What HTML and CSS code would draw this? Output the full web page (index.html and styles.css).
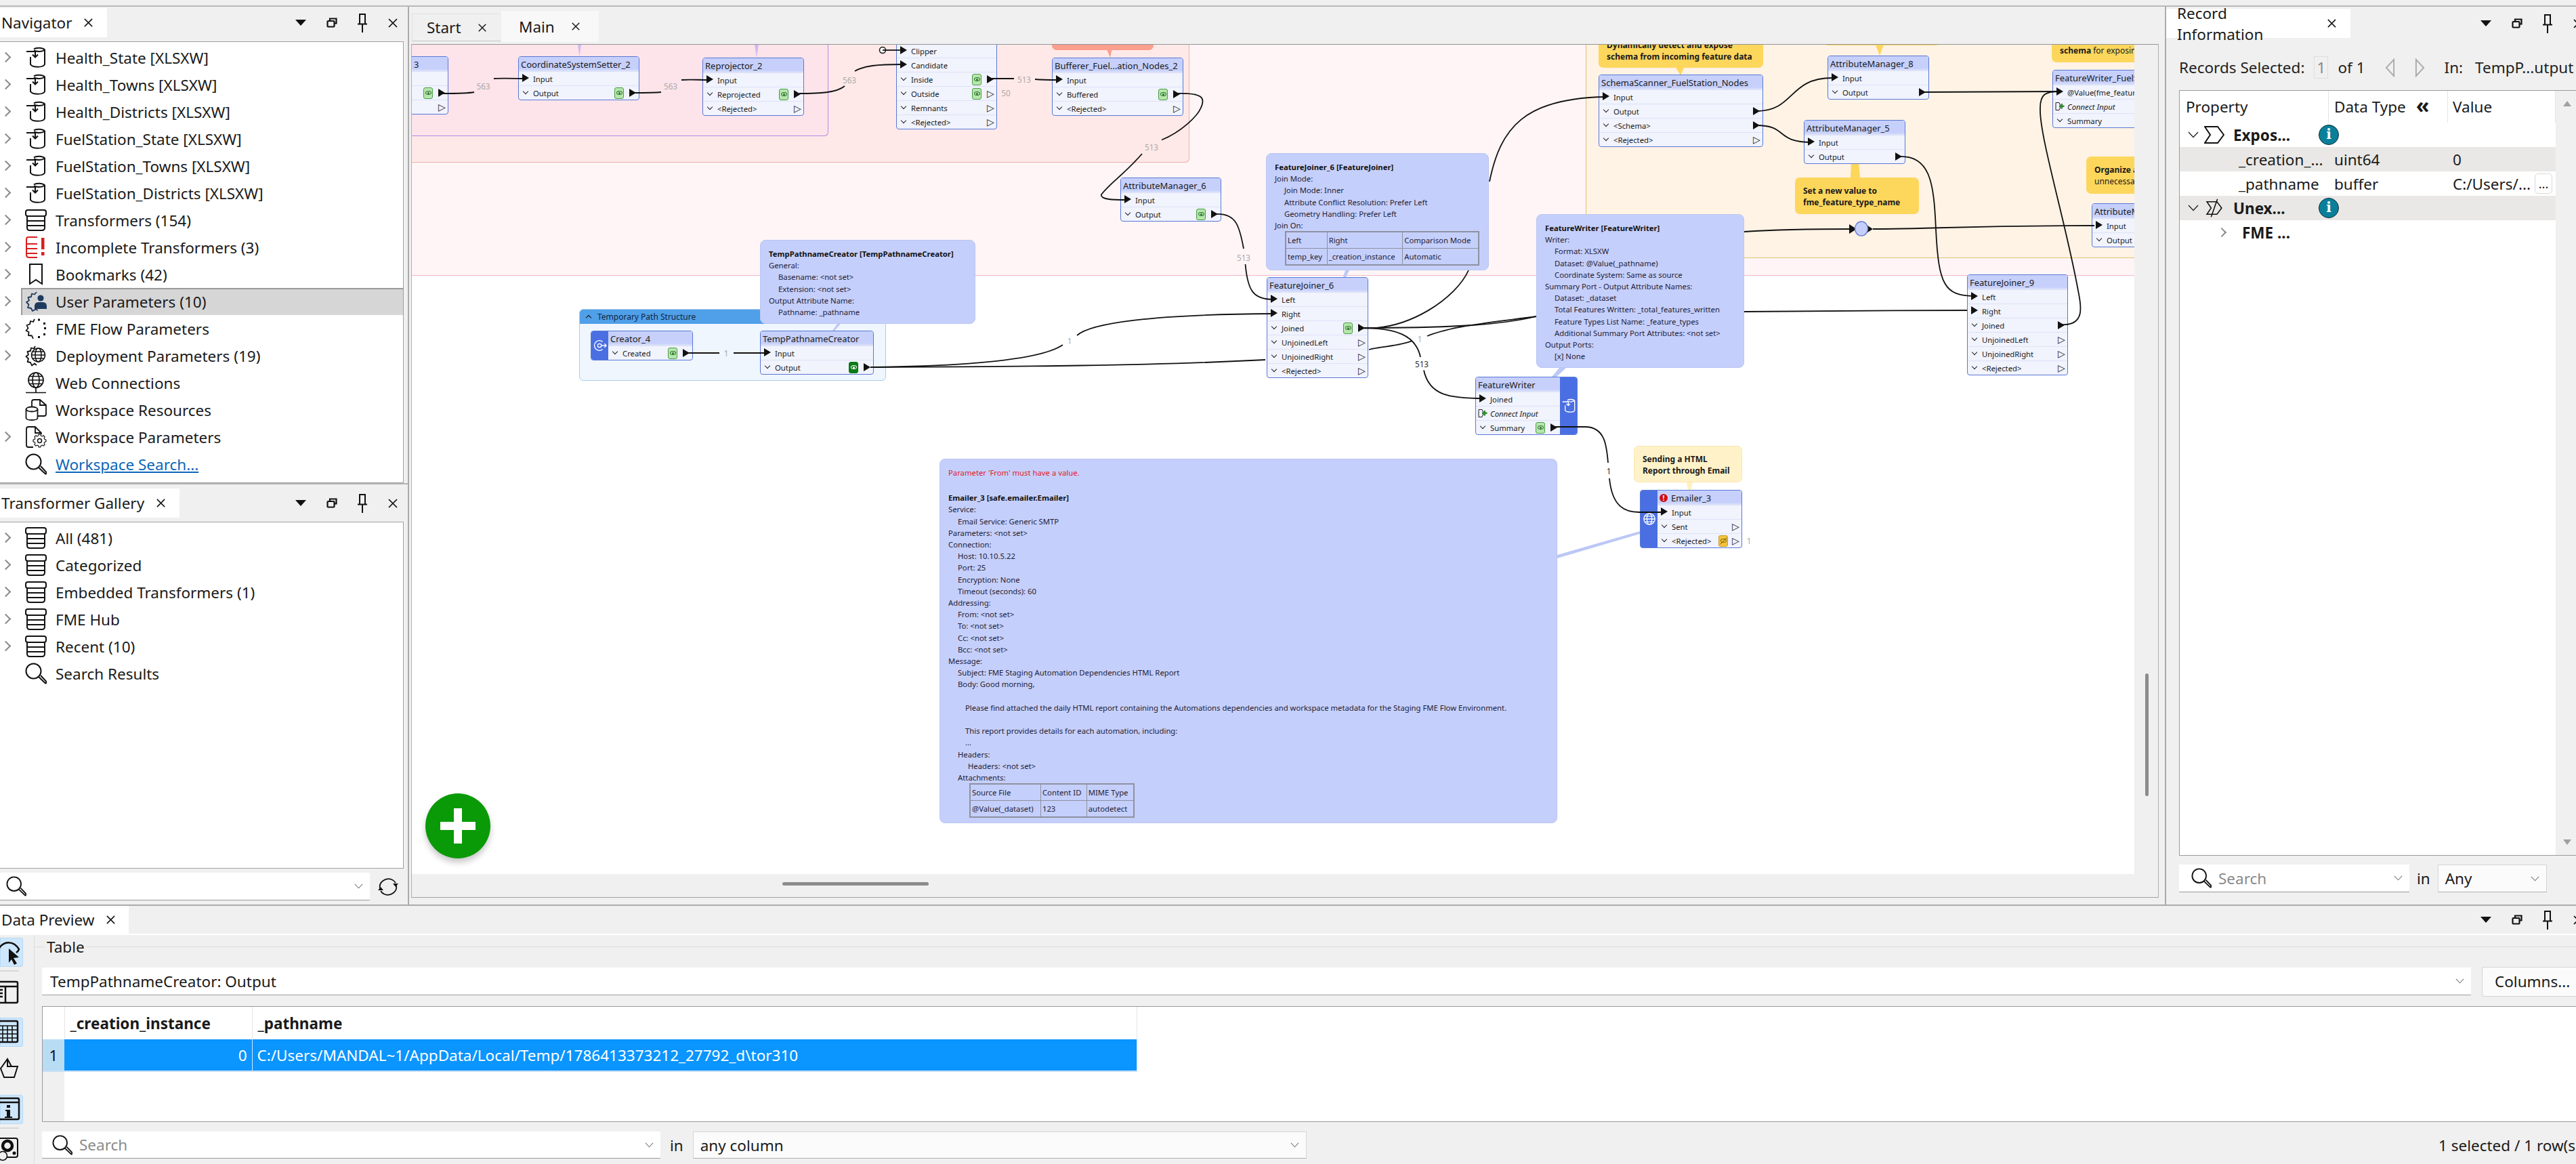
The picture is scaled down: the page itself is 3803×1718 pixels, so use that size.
FILE: index.html
```html
<!DOCTYPE html>
<html lang="en">
<head>
  <meta charset="UTF-8" />
  <title>FME Workbench</title>
  <link rel="stylesheet" href="styles.css">
</head>
<body>
  <!-- shared icons -->
  <svg class="defs" width="0" height="0">
    <defs>
      <symbol id="i-feature" viewBox="0 0 30 32"><g fill="none" stroke="currentColor" stroke-width="2">
        <path d="M12 3.5C15 1 25 1 28 4.5V26C26 31 10 31 7 26V15"/><path d="M12 5.5C17 8 24 7.5 28 4.5"/>
        <path d="M1 7H14V15M10 11.5L14 15.5L18 11.5"/></g></symbol>
      <symbol id="i-stack" viewBox="0 0 32 32"><g fill="none" stroke="currentColor" stroke-width="2">
        <rect x="1" y="1" width="30" height="9" rx="3"/><path d="M3 10V27Q3 31 7 31H25Q29 31 29 27V10M3 17H29M3 24H29"/></g></symbol>
      <symbol id="i-incomplete" viewBox="0 0 32 32"><g fill="none" stroke="#d8201f" stroke-width="2">
        <path d="M18 1H5Q2 1 2 4V27Q2 31 6 31H18M2 11H18M2 18H18M2 25H18"/></g><rect x="24" y="2" width="4.5" height="17" fill="#d8201f"/><rect x="24" y="23" width="4.5" height="5" fill="#d8201f"/></symbol>
      <symbol id="i-bookmark" viewBox="0 0 22 32"><path d="M2 1H20V30L11 24L2 30Z" fill="none" stroke="currentColor" stroke-width="2"/></symbol>
      <g id="tooth"><path d="M-2.8-10.4L-2-13.5H2L2.8-10.4L5.4-9.3" fill="none" stroke="currentColor" stroke-width="1.7" stroke-linejoin="round"/></g>
      <symbol id="i-gear" viewBox="-15 -15 30 30">
        <use href="#tooth"/><use href="#tooth" transform="rotate(45)"/><use href="#tooth" transform="rotate(90)"/><use href="#tooth" transform="rotate(135)"/>
        <use href="#tooth" transform="rotate(180)"/><use href="#tooth" transform="rotate(225)"/><use href="#tooth" transform="rotate(270)"/><use href="#tooth" transform="rotate(315)"/>
      </symbol>
      <symbol id="i-userparam" viewBox="0 0 32 32">
        <path d="M17 2L14 5.500L10 4.500L9 9L4.500 10L6 14.500L2 17L5.500 20.500L4 25L9 26L11 30L15.500 27.500L19 29" fill="none" stroke="#1f3a5f" stroke-width="1.800" stroke-linejoin="round"/>
        <circle cx="23" cy="11" r="4.600" fill="#1f3a5f"/><path d="M14 27V23Q14 17 20 17H26Q32 17 32 23V27Z" fill="#1f3a5f"/></symbol>
      <symbol id="i-flowparam" viewBox="0 0 32 32">
        <path d="M14 2L12 6L8 5L7 9.500L2.500 11L4.500 15.500L1.500 19L5.500 21L5 26L10 26.500L12 31" fill="none" stroke="currentColor" stroke-width="1.800" stroke-linejoin="round"/>
        <path d="M19 1.500h3v3h-3zM27 7h3v3h-3zM28 14h3v3h-3zM27 23h3v3h-3zM19 27h3v3h-3z" fill="currentColor"/></symbol>
      <symbol id="i-deploy" viewBox="0 0 32 32">
        <path d="M15 2L13 5.500L9 4.500L8 9L3.500 10L5 14.500L1.500 17L5 20.500L3.500 25L8 26L10 30.500L14 27.500L17 30" fill="none" stroke="currentColor" stroke-width="1.800" stroke-linejoin="round"/>
        <g fill="none" stroke="currentColor" stroke-width="1.500"><circle cx="19.500" cy="15" r="10"/><ellipse cx="19.500" cy="15" rx="4.500" ry="10"/><path d="M9.500 15H29.500M11 10H28M11 20H28"/></g></symbol>
      <symbol id="i-globe" viewBox="0 0 32 32"><g fill="none" stroke="currentColor" stroke-width="1.700">
        <circle cx="16" cy="12" r="11"/><ellipse cx="16" cy="12" rx="5" ry="11"/><path d="M5 12H27M7 6.500H25M7 17.500H25M16 23V30M1 30.500H31"/></g></symbol>
      <symbol id="i-resource" viewBox="0 0 32 32"><g fill="none" stroke="currentColor" stroke-width="1.800">
        <path d="M10 12V4Q10 1 13 1H22L31 9V22Q31 25 28 25H19"/><path d="M22 1V9H31"/>
        <ellipse cx="10" cy="15" rx="8.500" ry="3.500"/><path d="M1.500 15V28C2 32 18 32 18.500 28V15"/></g></symbol>
      <symbol id="i-wsparam" viewBox="0 0 32 32"><g fill="none" stroke="currentColor" stroke-width="1.800">
        <path d="M12 31H5Q2 31 2 28V4Q2 1 5 1H15L24 10V12"/><path d="M15 1V10H24"/></g>
        <use href="#i-gear" x="11" y="11" width="21" height="21"/><circle cx="21.500" cy="21.500" r="3" fill="none" stroke="currentColor" stroke-width="1.500"/></symbol>
      <symbol id="i-search" viewBox="0 0 32 32"><g fill="none" stroke="currentColor" stroke-width="2">
        <circle cx="12.500" cy="12.500" r="11"/><path d="M20 21L30 30.500M23 19L31 27.500Q32 30 30 31"/></g></symbol>
      <symbol id="i-close" viewBox="0 0 16 16"><path d="M2 2L14 14M14 2L2 14" fill="none" stroke="currentColor" stroke-width="1.700"/></symbol>
      <symbol id="i-restore" viewBox="0 0 16 16"><g fill="none" stroke="currentColor" stroke-width="2.200"><path d="M5 4V1.500H14.500V8.500H11.500"/><rect x="1.500" y="5" width="10" height="8.500" rx="1"/></g></symbol>
      <symbol id="i-pin" viewBox="0 0 14 30"><g fill="none" stroke="currentColor" stroke-width="2"><path d="M3 16V2H11V16"/><path d="M0 16.500H14"/><path d="M7 17V29"/></g></symbol>
      <symbol id="i-chevron" viewBox="0 0 16 10"><path d="M1 1L8 8.500L15 1" fill="none" stroke="currentColor" stroke-width="1.300"/></symbol>
      <symbol id="i-refresh" viewBox="0 0 32 32"><g fill="none" stroke="currentColor" stroke-width="1.800">
        <path d="M4 18C2 9 12 2 21 5Q25 6.500 27 10"/><path d="M28 14C30 23 20 30 11 27Q7 25.500 5 22"/></g>
        <path d="M23 11H31L27 16ZM1 21H9L5 16Z" fill="currentColor"/></symbol>
      <symbol id="i-web-white" viewBox="0 0 22 22"><g fill="none" stroke="#fff" stroke-width="1.400"><circle cx="11" cy="11" r="9"/><ellipse cx="11" cy="11" rx="4" ry="9"/><path d="M2 11H20M3.500 6.500H18.500M3.500 15.500H18.500"/></g></symbol>
    </defs>
  </svg>

  <div class="top-rule"></div>

  <div class="main">
    <aside class="left-dock">
      <section class="dock dock-nav">
        <div class="dock-head">
          <div class="dock-tab">Navigator <svg class="tab-x"><use href="#i-close"/></svg></div>
          <div class="dock-tools">
            <span class="tri-down"></span>
            <svg class="tool"><use href="#i-restore"/></svg>
            <svg class="tool-pin"><use href="#i-pin"/></svg>
            <svg class="tool"><use href="#i-close"/></svg>
          </div>
        </div>
        <div class="tree">
          <div class="tree-row kids"><div class="tree-cell"><svg class="ico"><use href="#i-feature"/></svg>Health_State [XLSXW]</div></div>
          <div class="tree-row kids"><div class="tree-cell"><svg class="ico"><use href="#i-feature"/></svg>Health_Towns [XLSXW]</div></div>
          <div class="tree-row kids"><div class="tree-cell"><svg class="ico"><use href="#i-feature"/></svg>Health_Districts [XLSXW]</div></div>
          <div class="tree-row kids"><div class="tree-cell"><svg class="ico"><use href="#i-feature"/></svg>FuelStation_State [XLSXW]</div></div>
          <div class="tree-row kids"><div class="tree-cell"><svg class="ico"><use href="#i-feature"/></svg>FuelStation_Towns [XLSXW]</div></div>
          <div class="tree-row kids"><div class="tree-cell"><svg class="ico"><use href="#i-feature"/></svg>FuelStation_Districts [XLSXW]</div></div>
          <div class="tree-row kids"><div class="tree-cell"><svg class="ico"><use href="#i-stack"/></svg>Transformers (154)</div></div>
          <div class="tree-row kids"><div class="tree-cell"><svg class="ico"><use href="#i-incomplete"/></svg>Incomplete Transformers (3)</div></div>
          <div class="tree-row kids"><div class="tree-cell"><svg class="ico"><use href="#i-bookmark"/></svg>Bookmarks (42)</div></div>
          <div class="tree-row kids selected"><div class="tree-cell"><svg class="ico"><use href="#i-userparam"/></svg>User Parameters (10)</div></div>
          <div class="tree-row kids"><div class="tree-cell"><svg class="ico"><use href="#i-flowparam"/></svg>FME Flow Parameters</div></div>
          <div class="tree-row kids"><div class="tree-cell"><svg class="ico"><use href="#i-deploy"/></svg>Deployment Parameters (19)</div></div>
          <div class="tree-row"><div class="tree-cell"><svg class="ico"><use href="#i-globe"/></svg>Web Connections</div></div>
          <div class="tree-row"><div class="tree-cell"><svg class="ico"><use href="#i-resource"/></svg>Workspace Resources</div></div>
          <div class="tree-row kids"><div class="tree-cell"><svg class="ico"><use href="#i-wsparam"/></svg>Workspace Parameters</div></div>
          <div class="tree-row"><div class="tree-cell"><svg class="ico"><use href="#i-search"/></svg><a class="link">Workspace Search...</a></div></div>
        </div>
      </section>

      <section class="dock dock-gallery">
        <div class="dock-head">
          <div class="dock-tab">Transformer Gallery <svg class="tab-x"><use href="#i-close"/></svg></div>
          <div class="dock-tools">
            <span class="tri-down"></span>
            <svg class="tool"><use href="#i-restore"/></svg>
            <svg class="tool-pin"><use href="#i-pin"/></svg>
            <svg class="tool"><use href="#i-close"/></svg>
          </div>
        </div>
        <div class="tree gallery-tree">
          <div class="tree-row kids"><div class="tree-cell"><svg class="ico"><use href="#i-stack"/></svg>All (481)</div></div>
          <div class="tree-row kids"><div class="tree-cell"><svg class="ico"><use href="#i-stack"/></svg>Categorized</div></div>
          <div class="tree-row kids"><div class="tree-cell"><svg class="ico"><use href="#i-stack"/></svg>Embedded Transformers (1)</div></div>
          <div class="tree-row kids"><div class="tree-cell"><svg class="ico"><use href="#i-stack"/></svg>FME Hub</div></div>
          <div class="tree-row kids"><div class="tree-cell"><svg class="ico"><use href="#i-stack"/></svg>Recent (10)</div></div>
          <div class="tree-row"><div class="tree-cell"><svg class="ico"><use href="#i-search"/></svg>Search Results</div></div>
        </div>
        <div class="gallery-search">
          <div class="search-box gallery-box"><svg class="search-ico"><use href="#i-search"/></svg><svg class="drop"><use href="#i-chevron"/></svg></div>
          <svg class="refresh"><use href="#i-refresh"/></svg>
        </div>
      </section>
    </aside>

    <main class="center">
      <div class="doc-tabs">
        <div class="doc-tab">Start <svg class="doc-x"><use href="#i-close"/></svg></div>
        <div class="doc-tab active">Main <svg class="doc-x"><use href="#i-close"/></svg></div>
      </div>

      <div class="canvas-frame">
        <div class="canvas-row">
          <div class="canvas">
            <div class="bm bm-band"></div>
            <div class="bm bm-red"></div>
            <div class="bm bm-purple"></div>
            <div class="bm bm-orange"></div>
            <div class="bm bm-temp"><div class="bm-temp-head"><span class="caret"></span>Temporary Path Structure</div></div>

            <!-- wires that run behind the nodes -->
            <svg class="wires" viewBox="608 67 2543 1224">
              <path class="stub" d="M853 67H858L855.500 84Z M1114 67H1120L1117 86Z"/>
              <path class="stub-salmon" d="M1633 72H1642L1639 86Z"/>
              <path class="stub-yellow" d="M2474 101H2486L2481 112Z M2769 67H2781L2775 83Z M2733 240H2744L2746 263H2732Z"/>
              <path class="stub-cream" d="M2490 713H2499L2496 724H2492Z"/>
              <path class="stub-blue" d="M1236 479H1241L1232 489H1229Z M1986 400H1992L1987 410H1983Z M2302 544H2312L2298 557H2291Z M2299 820L2421 785V789L2299 825Z"/>
              <path class="wire" d="M1285 543C1500 542 1700 541 1868 532M2021 517C2040 512 2065 512 2085 504M2107 497C2150 480 2220 475 2268 468"/>
              <path class="wire" d="M2575 461C2700 460 2800 459 2914 459"/>
            </svg>

            <div class="ann ann-salmon"></div>
            <div class="ann ann-detect">Dynamically detect and expose<br>schema from incoming feature data</div>
            <div class="ann ann-am8"></div>
            <div class="ann ann-value">Set a new value to<br>fme_feature_type_name</div>
            <div class="ann ann-schema"><b>schema</b> for exposing</div>
            <div class="ann ann-org"><b>Organize attributes</b><br>unnecessary</div>
            <div class="ann ann-email">Sending a HTML<br>Report through Email</div>

            <div class="node n-partial">
              <div class="node-title partial-title">3</div>
              <div class="port blank"></div>
              <div class="port out hit bare"><span></span><i class="eye"></i></div>
              <div class="port out open bare"><span></span></div>
            </div>
            <div class="node n-coord">
              <div class="node-title">CoordinateSystemSetter_2</div>
              <div class="port in"><span>Input</span></div>
              <div class="port out hit"><span>Output</span><i class="eye"></i></div>
            </div>
            <div class="node n-reproj">
              <div class="node-title">Reprojector_2</div>
              <div class="port in"><span>Input</span></div>
              <div class="port out hit"><span>Reprojected</span><i class="eye"></i></div>
              <div class="port out open"><span>&lt;Rejected&gt;</span></div>
            </div>
            <div class="node n-clip">
              <div class="port in"><span>Clipper</span></div>
              <div class="port in"><span>Candidate</span></div>
              <div class="port out hit"><span>Inside</span><i class="eye"></i></div>
              <div class="port out open"><span>Outside</span><i class="eye"></i></div>
              <div class="port out open"><span>Remnants</span></div>
              <div class="port out open"><span>&lt;Rejected&gt;</span></div>
            </div>
            <div class="node n-buffer">
              <div class="node-title">Bufferer_Fuel...ation_Nodes_2</div>
              <div class="port in"><span>Input</span></div>
              <div class="port out hit"><span>Buffered</span><i class="eye"></i></div>
              <div class="port out open"><span>&lt;Rejected&gt;</span></div>
            </div>
            <div class="node n-am6">
              <div class="node-title">AttributeManager_6</div>
              <div class="port in"><span>Input</span></div>
              <div class="port out hit"><span>Output</span><i class="eye"></i></div>
            </div>
            <div class="node n-fj6">
              <div class="node-title">FeatureJoiner_6</div>
              <div class="port in"><span>Left</span></div>
              <div class="port in"><span>Right</span></div>
              <div class="port out hit"><span>Joined</span><i class="eye"></i></div>
              <div class="port out open"><span>UnjoinedLeft</span></div>
              <div class="port out open"><span>UnjoinedRight</span></div>
              <div class="port out open"><span>&lt;Rejected&gt;</span></div>
            </div>
            <div class="node banded n-fw">
              <div class="node-body">
                <div class="node-title">FeatureWriter</div>
                <div class="port in"><span>Joined</span></div>
                <div class="port conn"><svg class="conn-ico" viewBox="0 0 14 14"><path d="M1 1.500L6 1.500L8 7L6 12.500H1Z" fill="none" stroke="#222" stroke-width="1"/><path d="M6 5.500H8.500V3H11V5.500H13.500V8H11V10.500H8.500V8H6Z" fill="#2e8b2e"/></svg><span>Connect Input</span></div>
                <div class="port out hit"><span>Summary</span><i class="eye"></i></div>
              </div>
              <div class="band"><svg class="band-ico band-feature"><use href="#i-feature"/></svg></div>
            </div>
            <div class="node n-schema">
              <div class="node-title">SchemaScanner_FuelStation_Nodes</div>
              <div class="port in"><span>Input</span></div>
              <div class="port out hit"><span>Output</span></div>
              <div class="port out hit"><span>&lt;Schema&gt;</span></div>
              <div class="port out open"><span>&lt;Rejected&gt;</span></div>
            </div>
            <div class="node n-am8">
              <div class="node-title">AttributeManager_8</div>
              <div class="port in"><span>Input</span></div>
              <div class="port out hit"><span>Output</span></div>
            </div>
            <div class="node n-am5">
              <div class="node-title">AttributeManager_5</div>
              <div class="port in"><span>Input</span></div>
              <div class="port out hit"><span>Output</span></div>
            </div>
            <div class="node n-fwfuel">
              <div class="node-title">FeatureWriter_FuelStation</div>
              <div class="port in"><span>@Value(fme_feature_type)</span></div>
              <div class="port conn"><svg class="conn-ico" viewBox="0 0 14 14"><path d="M1 1.500L6 1.500L8 7L6 12.500H1Z" fill="none" stroke="#222" stroke-width="1"/><path d="M6 5.500H8.500V3H11V5.500H13.500V8H11V10.500H8.500V8H6Z" fill="#2e8b2e"/></svg><span>Connect Input</span></div>
              <div class="port out"><span>Summary</span></div>
            </div>
            <div class="node n-attrm">
              <div class="node-title">AttributeManager_9</div>
              <div class="port in"><span>Input</span></div>
              <div class="port out"><span>Output</span></div>
            </div>
            <div class="node n-fj9">
              <div class="node-title">FeatureJoiner_9</div>
              <div class="port in"><span>Left</span></div>
              <div class="port in"><span>Right</span></div>
              <div class="port out hit"><span>Joined</span></div>
              <div class="port out open"><span>UnjoinedLeft</span></div>
              <div class="port out open"><span>UnjoinedRight</span></div>
              <div class="port out open"><span>&lt;Rejected&gt;</span></div>
            </div>
            <div class="node banded n-emailer">
              <div class="band"><svg class="band-ico band-web"><use href="#i-web-white"/></svg></div>
              <div class="node-body">
                <div class="node-title"><i class="err">!</i>Emailer_3</div>
                <div class="port in"><span>Input</span></div>
                <div class="port out open"><span>Sent</span></div>
                <div class="port out open"><span>&lt;Rejected&gt;</span><i class="eye cut"></i></div>
              </div>
            </div>
            <div class="node banded n-creator">
              <div class="band"><svg class="band-ico band-creator" viewBox="0 0 22 22"><g fill="none" stroke="#fff" stroke-width="1.400"><path d="M15 5A8 8 0 1 0 15 17"/><circle cx="10" cy="11" r="3"/><path d="M13 11H21M18 8L21 11L18 14"/></g></svg></div>
              <div class="node-body">
                <div class="node-title">Creator_4</div>
                <div class="port out hit"><span>Created</span><i class="eye"></i></div>
              </div>
            </div>
            <div class="node n-temp">
              <div class="node-title">TempPathnameCreator</div>
              <div class="port in"><span>Input</span></div>
              <div class="port out hit"><span>Output</span><i class="eye live"></i></div>
            </div>

            <!-- wires that start on a port and run over the node edge -->
            <svg class="wires" viewBox="608 67 2543 1224">
              <path class="wire" d="M653 139C680 139 690 139 700 137M729 117C745 116 760 117 776 117"/>
              <path class="wire" d="M936 138C955 138 965 138 976 137M1006 119C1020 118 1030 119 1046 119"/>
              <path class="wire" d="M1180 139C1210 139 1235 138 1247 128M1262 106C1275 98 1295 96 1332 96"/>
              <circle class="dot" cx="1303" cy="75" r="4.500"/>
              <path class="wire" d="M1303 75H1330"/>
              <path class="wire" d="M1462 117H1497M1528 118C1540 119 1550 119 1561 119"/>
              <path class="wire" d="M1737 139C1775 138 1780 145 1773 160C1768 172 1745 195 1715 207.500M1686 228C1660 258 1640 270 1626 288C1624 296 1645 296 1664 296"/>
              <path class="wire" d="M1794 317C1825 315 1830 335 1836 368M1838.500 391C1842 430 1850 443 1880 443"/>
              <path class="wire" d="M1285 543C1450 541 1540 530 1569 510M1590 496C1610 478 1700 465 1880 464"/>
              <path class="wire" d="M2008 485C2080 490 2150 440 2168 400M2199 269C2215 190 2250 146 2370 144"/>
              <path class="wire" d="M2008 485C2060 485 2090 495 2097 528M2102 547.500C2110 585 2140 589 2192 589"/>
              <path class="wire" d="M2008 485C2150 485 2220 480 2268 468M2575 343C2620 340 2680 339 2735 339M2765 339C2850 339 2900 334 3092 334"/>
              <path class="tri" d="M2730 332L2741 339L2730 346Z M2754 332L2765 339L2754 346Z"/>
              <ellipse class="junction" cx="2748" cy="338.500" rx="9.500" ry="10.500"/>
              <path class="wire" d="M2593 165C2650 165 2640 116 2705 116"/>
              <path class="wire" d="M2593 186C2640 186 2620 211 2675 211"/>
              <path class="wire" d="M2802 232C2850 230 2855 270 2858 340C2862 420 2870 438 2915 438"/>
              <path class="wire" d="M2837 137L3040 136"/>
              <path class="wire" d="M3043 480C3080 482 3072 450 3068 430C3050 330 3010 200 3012 160C3012 140 3020 136 3040 136"/>
              <path class="wire" d="M2293 631H2340C2370 631 2372 660 2374 684M2376 707C2380 750 2400 757 2420 757H2458"/>
              <path class="wire" d="M1013 522H1062M1083 522H1135"/>
              <text class="w-label" x="713.500" y="133">563</text>
              <text class="w-label" x="990" y="133">563</text>
              <text class="w-label" x="1254" y="124">563</text>
              <text class="w-label" x="1512" y="123">513</text>
              <text class="w-label" x="1485" y="143">50</text>
              <text class="w-label" x="1700" y="223">513</text>
              <text class="w-label" x="1836" y="386">513</text>
              <text class="w-label" x="1579" y="509">1</text>
              <text class="w-label" x="2096" y="506">1</text>
              <text class="w-label" x="1072" y="527">1</text>
              <text class="w-label" x="2582" y="804">1</text>
              <text class="w-label dark" x="2099" y="543">513</text>
              <text class="w-label dark" x="2375" y="701">1</text>
            </svg>

            <div class="tip tip-temp">
              <p class="tip-name">TempPathnameCreator [TempPathnameCreator]</p>
              <p>General:</p>
              <p class="i1">Basename: &lt;not set&gt;</p>
              <p class="i1">Extension: &lt;not set&gt;</p>
              <p>Output Attribute Name:</p>
              <p class="i1">Pathname: _pathname</p>
            </div>
            <div class="tip tip-fj">
              <p class="tip-name">FeatureJoiner_6 [FeatureJoiner]</p>
              <p>Join Mode:</p>
              <p class="i1">Join Mode: Inner</p>
              <p class="i1">Attribute Conflict Resolution: Prefer Left</p>
              <p class="i1">Geometry Handling: Prefer Left</p>
              <p>Join On:</p>
              <table class="tip-table fj-table">
                <tr><td>Left</td><td>Right</td><td>Comparison Mode</td></tr>
                <tr><td>temp_key</td><td>_creation_instance</td><td>Automatic</td></tr>
              </table>
            </div>
            <div class="tip tip-fw">
              <p class="tip-name">FeatureWriter [FeatureWriter]</p>
              <p>Writer:</p>
              <p class="i1">Format: XLSXW</p>
              <p class="i1">Dataset: @Value(_pathname)</p>
              <p class="i1">Coordinate System: Same as source</p>
              <p>Summary Port - Output Attribute Names:</p>
              <p class="i1">Dataset: _dataset</p>
              <p class="i1">Total Features Written: _total_features_written</p>
              <p class="i1">Feature Types List Name: _feature_types</p>
              <p class="i1">Additional Summary Port Attributes: &lt;not set&gt;</p>
              <p>Output Ports:</p>
              <p class="i1">[x] None</p>
            </div>
            <div class="tip tip-email">
              <p class="tip-error">Parameter 'From' must have a value.</p>
              <p class="tip-name">Emailer_3 [safe.emailer.Emailer]</p>
              <p>Service:</p>
              <p class="i1">Email Service: Generic SMTP</p>
              <p>Parameters: &lt;not set&gt;</p>
              <p>Connection:</p>
              <p class="i1">Host: 10.10.5.22</p>
              <p class="i1">Port: 25</p>
              <p class="i1">Encryption: None</p>
              <p class="i1">Timeout (seconds): 60</p>
              <p>Addressing:</p>
              <p class="i1">From: &lt;not set&gt;</p>
              <p class="i1">To: &lt;not set&gt;</p>
              <p class="i1">Cc: &lt;not set&gt;</p>
              <p class="i1">Bcc: &lt;not set&gt;</p>
              <p>Message:</p>
              <p class="i1">Subject: FME Staging Automation Dependencies HTML Report</p>
              <p class="i1">Body: Good morning,</p>
              <p class="i3 gap">Please find attached the daily HTML report containing the Automations dependencies and workspace metadata for the Staging FME Flow Environment.</p>
              <p class="i3 gap">This report provides details for each automation, including:</p>
              <p class="i3">...</p>
              <p class="i1">Headers:</p>
              <p class="i2">Headers: &lt;not set&gt;</p>
              <p class="i1">Attachments:</p>
              <table class="tip-table mail-table">
                <tr><td>Source File</td><td>Content ID</td><td>MIME Type</td></tr>
                <tr><td>@Value(_dataset)</td><td>123</td><td>autodetect</td></tr>
              </table>
            </div>

            <div class="add-btn"><svg class="add-plus" viewBox="0 0 52 52"><path d="M20 0H32V20H52V32H32V52H20V32H0V20H20Z" fill="#fff"/></svg></div>
          </div>
          <div class="v-gutter"><div class="v-thumb"></div></div>
        </div>
        <div class="h-gutter"><div class="h-thumb"></div></div>
      </div>
    </main>

    <aside class="right-dock">
      <div class="dock-head">
        <div class="dock-tab record-tab">Record Information <svg class="tab-x"><use href="#i-close"/></svg></div>
        <div class="dock-tools">
          <span class="tri-down"></span>
          <svg class="tool"><use href="#i-restore"/></svg>
          <svg class="tool-pin"><use href="#i-pin"/></svg>
          <svg class="tool"><use href="#i-close"/></svg>
        </div>
      </div>
      <div class="rec-bar">
        <span>Records Selected:</span>
        <span class="rec-index">1</span>
        <span>of 1</span>
        <svg class="rec-nav" viewBox="0 0 16 30"><path d="M14 2L2 15L14 28Z" fill="none" stroke="#aaa" stroke-width="2"/></svg>
        <svg class="rec-nav" viewBox="0 0 16 30"><path d="M2 2L14 15L2 28Z" fill="none" stroke="#aaa" stroke-width="2"/></svg>
        <span class="rec-in">In:</span>
        <span>TempP...utput</span>
      </div>
      <div class="rec-box">
        <div class="rec-list">
          <div class="rec-row rec-header">
            <div class="col-prop">Property</div>
            <div class="col-type">Data Type <b class="collapse">«</b></div>
            <div class="col-val">Value</div>
          </div>
          <div class="rec-row rec-group">
            <div class="col-prop group-cell">
              <svg class="rec-chev"><use href="#i-chevron"/></svg>
              <svg class="sigma" viewBox="0 0 30 26"><path d="M1 1H20L29 13L20 25H1L9 13Z" fill="none" stroke="#111" stroke-width="2"/></svg>
              <b>Expos...</b><i class="info">i</i>
            </div>
          </div>
          <div class="rec-row shaded">
            <div class="col-prop attr">_creation_...</div>
            <div class="col-type">uint64</div>
            <div class="col-val">0</div>
          </div>
          <div class="rec-row">
            <div class="col-prop attr">_pathname</div>
            <div class="col-type">buffer</div>
            <div class="col-val path-val">C:/Users/...<span class="more">...</span></div>
          </div>
          <div class="rec-row rec-group shaded">
            <div class="col-prop group-cell">
              <svg class="rec-chev"><use href="#i-chevron"/></svg>
              <svg class="sigma" viewBox="0 0 30 36"><path d="M1 6H20L29 18L20 30H1L9 18Z M21 1L9 35" fill="none" stroke="#111" stroke-width="2"/></svg>
              <b>Unex...</b><i class="info">i</i>
            </div>
          </div>
          <div class="rec-row rec-group">
            <div class="col-prop fme-cell"><span class="side-chev"></span><b>FME ...</b></div>
          </div>
        </div>
        <div class="rec-scroll"><span class="scroll-up"></span><span class="scroll-down"></span></div>
      </div>
      <div class="rec-search">
        <div class="search-box rec-search-box"><svg class="search-ico"><use href="#i-search"/></svg><span class="placeholder">Search</span><svg class="drop"><use href="#i-chevron"/></svg></div>
        <span>in</span>
        <div class="combo rec-any">Any<svg class="drop"><use href="#i-chevron"/></svg></div>
      </div>
    </aside>
  </div>

  <section class="bottom-dock">
    <div class="dock-head data-head">
      <div class="dock-tab">Data Preview <svg class="tab-x"><use href="#i-close"/></svg></div>
      <div class="dock-tools">
        <span class="tri-down"></span>
        <svg class="tool"><use href="#i-restore"/></svg>
        <svg class="tool-pin"><use href="#i-pin"/></svg>
        <svg class="tool"><use href="#i-close"/></svg>
      </div>
    </div>
    <div class="data-body">
      <div class="tool-strip">
        <div class="strip-btn on"><svg viewBox="0 0 34 40"><g fill="none" stroke="#111" stroke-width="2.500"><path d="M-2 17C5 4 20 4 28 17Q27 20 24 22"/></g><path d="M13 16L28 29L20 30L25 38L21 40L17 32L13 37Z" fill="#111"/></svg></div>
        <div class="strip-sep"></div>
        <div class="strip-btn"><svg viewBox="0 0 34 40"><g fill="none" stroke="#111" stroke-width="2.500"><path d="M-2 4H24Q26 4 26 6V33Q26 35 24 35H-2M-2 11H26M8 11V35"/><path d="M-2 16H4M-2 21H4M-2 26H4"/></g></svg></div>
        <div class="strip-btn on"><svg viewBox="0 0 34 40"><g fill="none" stroke="#111" stroke-width="2.500"><path d="M-2 5H24Q26 5 26 7V34Q26 36 24 36H-2"/></g><g fill="none" stroke="#111" stroke-width="1.600"><path d="M-2 12H26M-2 18H26M-2 24H26M-2 30H26M4 12V36M11 12V36M18 12V36"/></g></svg></div>
        <div class="strip-btn"><svg viewBox="0 0 34 40"><path d="M11 4L17 15H26L21 31H6L1 18Z M11 4V15H17" fill="none" stroke="#111" stroke-width="2"/></svg></div>
        <div class="strip-btn on"><svg viewBox="0 0 34 40"><g fill="none" stroke="#111" stroke-width="2.500"><path d="M-2 5H26Q28 5 28 7V34Q28 36 26 36H-2M-2 11H28"/></g><path d="M10 15h5v4h-5zM8 22h7v10h3v2H7v-2h3v-8H8z" fill="#111"/></svg></div>
        <div class="strip-sep"></div>
        <div class="strip-btn"><svg viewBox="0 0 34 40"><rect x="-2" y="3" width="28" height="28" rx="3" fill="none" stroke="#111" stroke-width="2"/><circle cx="11" cy="14" r="7" fill="none" stroke="#111" stroke-width="4.500"/><circle cx="21" cy="25" r="2.500" fill="#111"/><circle cx="4" cy="29" r="6.500" fill="#f0f0f0" stroke="#111" stroke-width="1.600"/></svg></div>
      </div>
      <div class="data-main">
        <div class="group-line"><span class="group-label">Table</span></div>
        <div class="data-combo-row">
          <div class="combo data-combo">TempPathnameCreator: Output<svg class="drop"><use href="#i-chevron"/></svg></div>
          <div class="columns-btn">Columns...</div>
        </div>
        <div class="data-table-wrap">
          <table class="data-table">
            <colgroup><col class="c-num"><col class="c-a"><col class="c-b"></colgroup>
            <thead><tr><th class="num-head"></th><th>_creation_instance</th><th>_pathname</th></tr></thead>
            <tbody><tr class="row-sel"><td class="num">1</td><td class="right">0</td><td>C:/Users/MANDAL~1/AppData/Local/Temp/1786413373212_27792_d\tor310</td></tr></tbody>
          </table>
        </div>
        <div class="data-search-row">
          <div class="search-box data-search"><svg class="search-ico"><use href="#i-search"/></svg><span class="placeholder">Search</span><svg class="drop"><use href="#i-chevron"/></svg></div>
          <span>in</span>
          <div class="combo data-any">any column<svg class="drop"><use href="#i-chevron"/></svg></div>
          <span class="row-count">1 selected / 1 row(s)</span>
        </div>
      </div>
    </div>
  </section>
</body>
</html>
```

FILE: styles.css
```css
html, body {
  margin: 0;
  padding: 0;
}
body {
  width: 3803px;
  height: 1718px;
  overflow: hidden;
  background: #f0f0f0;
  color: #1a1a1a;
  font-family: "Noto Sans", "Open Sans", sans-serif;
  font-size: 22.5px;
  display: flex;
  flex-direction: column;
}
.defs {
  position: absolute;
}
p {
  margin: 0;
}

.top-rule {
  height: 8px;
  flex: none;
  border-bottom: 2px solid #b9b9b9;
}
.main {
  height: 1325px;
  flex: none;
  display: flex;
}

/* docks */
.left-dock {
  width: 602px;
  flex: none;
  border-right: 2px solid #ababab;
  display: flex;
  flex-direction: column;
}
.dock-nav {
  height: 705px;
  flex: none;
  padding-top: 2px;
  box-sizing: border-box;
  border-bottom: 2px solid #b4b4b4;
}
.dock-gallery {
  flex: 1;
  padding-top: 6px;
  display: flex;
  flex-direction: column;
}
.dock-head {
  height: 43px;
  flex: none;
  display: flex;
  align-items: stretch;
  justify-content: space-between;
}
.dock-tab {
  background: #fff;
  display: flex;
  align-items: center;
  gap: 17px;
  padding: 0 20px 0 2px;
}
.tab-x {
  width: 15px;
  height: 15px;
}
.dock-tools {
  width: 158px;
  margin-right: 14px;
  display: flex;
  align-items: center;
  justify-content: space-between;
}
.tri-down {
  width: 0;
  height: 0;
  margin-left: 6px;
  border-left: 8px solid transparent;
  border-right: 8px solid transparent;
  border-top: 9px solid #111;
}
.tool {
  width: 16px;
  height: 16px;
  color: #111;
}
.tool-pin {
  width: 14px;
  height: 30px;
  color: #111;
}

/* navigator trees */
.tree {
  margin-top: 6px;
  width: 596px;
  box-sizing: border-box;
  background: #fff;
  border-top: 1.5px solid #a0a0a0;
  border-right: 1.5px solid #a0a0a0;
  padding-top: 3px;
}
.dock-nav .tree {
  height: 652px;
  border-bottom: 1.5px solid #a0a0a0;
}
.gallery-tree {
  height: 512px;
  border-bottom: 1.5px solid #a0a0a0;
}
.tree-row {
  height: 40px;
  padding-left: 31px;
  position: relative;
  display: flex;
}
.tree-row.kids::before {
  content: "";
  position: absolute;
  left: 3px;
  top: 14px;
  width: 9px;
  height: 9px;
  border-top: 2.5px solid #8a8a8a;
  border-right: 2.5px solid #8a8a8a;
  transform: rotate(45deg);
}
.tree-cell {
  flex: 1;
  display: flex;
  align-items: center;
  padding-left: 6px;
}
.tree-row.selected .tree-cell {
  background: #d6d6d6;
  box-shadow: inset 2px 2px 0 #9b9b9b;
}
.ico {
  width: 32px;
  height: 32px;
  margin-right: 13px;
  flex: none;
  color: #111;
}
.link {
  color: #0b66b8;
  text-decoration: underline;
}

.gallery-search {
  margin-top: 6px;
  height: 41px;
  display: flex;
  align-items: center;
}
.search-box {
  background: #fff;
  box-sizing: border-box;
  height: 41px;
  border-bottom: 1.5px solid #9a9a9a;
  display: flex;
  align-items: center;
  padding: 0 10px 0 9px;
}
.gallery-box {
  width: 546px;
}
.search-ico {
  width: 30px;
  height: 30px;
  flex: none;
  color: #111;
}
.placeholder {
  color: #8a8a8a;
  margin-left: 10px;
}
.drop {
  width: 13px;
  height: 8px;
  margin-left: auto;
  color: #777;
  flex: none;
}
.refresh {
  width: 32px;
  height: 32px;
  margin-left: 11px;
  color: #111;
}

/* centre column */
.center {
  flex: 1;
  padding-left: 3px;
  display: flex;
  flex-direction: column;
  min-width: 0;
}
.doc-tabs {
  height: 55px;
  flex: none;
  padding-left: 1px;
  display: flex;
  align-items: flex-start;
}
.doc-tab {
  margin-top: 10px;
  height: 41px;
  width: 131px;
  box-sizing: border-box;
  padding-left: 21px;
  display: flex;
  align-items: center;
  gap: 24px;
  background: #f0f0f0;
  border-left: 1px solid #e0e0e0;
  border-top: 1px solid #e0e0e0;
  border-bottom: 1px solid #c4c4c4;
}
.doc-tab.active {
  margin: 6px 0 0 1px;
  height: 46px;
  width: 144px;
  padding-left: 26px;
  background: #f8f8f8;
  border: none;
}
.doc-x {
  width: 14px;
  height: 14px;
}
.canvas-frame {
  width: 2580px;
  height: 1260px;
  flex: none;
  box-sizing: border-box;
  border-top: 1.5px solid #949494;
  border-left: 1px solid #b0b0b0;
  border-right: 1px solid #b0b0b0;
  border-bottom: 1.5px solid #a0a0a0;
  display: flex;
  flex-direction: column;
}
.canvas-row {
  display: flex;
  height: 1224px;
  flex: none;
}
.canvas {
  width: 2543px;
  height: 1224px;
  flex: none;
  position: relative;
  overflow: hidden;
  background: #fff;
  font-size: 11.3px;
}
.v-gutter {
  flex: 1;
  padding: 928px 0 0 16px;
}
.v-thumb {
  width: 5px;
  height: 181px;
  border-radius: 3px;
  background: #8c8c8c;
}
.h-gutter {
  flex: 1;
  padding: 12px 0 0 547px;
}
.h-thumb {
  width: 216px;
  height: 5px;
  border-radius: 3px;
  background: #8c8c8c;
}

/* bookmarks */
.bm {
  position: absolute;
  box-sizing: border-box;
}
.bm-band {
  left: 0;
  top: 0;
  width: 2543px;
  height: 341px;
  background: #fff5f6;
  border-bottom: 1.5px solid #f0b9c9;
}
.bm-red {
  left: 0;
  top: 0;
  width: 1148px;
  height: 174px;
  background: #ffe9e8;
  border-right: 1.5px solid #e9b0ae;
  border-bottom: 1.5px solid #e9b0ae;
  border-bottom-right-radius: 6px;
}
.bm-purple {
  left: 0;
  top: 0;
  width: 615px;
  height: 135px;
  background: #fde4ea;
  border-right: 1.5px solid #b687e4;
  border-bottom: 1.5px solid #b687e4;
  border-bottom-right-radius: 6px;
}
.bm-orange {
  left: 1733px;
  top: 0;
  width: 810px;
  height: 315px;
  background: #fff3e5;
  border-left: 1.5px solid #e2c272;
  border-bottom: 1.5px solid #e2c272;
}
.bm-temp {
  left: 247px;
  top: 390px;
  width: 453px;
  height: 106px;
  background: #eff6fd;
  border: 1px solid #a9cdf0;
  border-radius: 6px;
  overflow: hidden;
}
.bm-temp-head {
  height: 21px;
  background: #4f9fe9;
  color: #10263d;
  display: flex;
  align-items: center;
  font-size: 12px;
  padding-left: 10px;
  gap: 10px;
}
.caret {
  width: 5px;
  height: 5px;
  margin-top: 3px;
  border-top: 1.2px solid #111;
  border-left: 1.2px solid #111;
  transform: rotate(45deg);
}

/* wires */
.wires {
  position: absolute;
  left: 0;
  top: 0;
  width: 2543px;
  height: 1224px;
  pointer-events: none;
}
.wire {
  fill: none;
  stroke: #111;
  stroke-width: 1.8;
}
.dot {
  fill: #fff;
  stroke: #111;
  stroke-width: 1.5;
}
.tri {
  fill: #111;
}
.junction {
  fill: #c5cffb;
  stroke: #6a81d8;
  stroke-width: 1.5;
}
.stub {
  fill: #cfbbee;
}
.stub-salmon {
  fill: #fb9f8e;
}
.stub-yellow {
  fill: #fdd65c;
}
.stub-cream {
  fill: #fff0c0;
}
.stub-blue {
  fill: #bcc8f5;
}
.w-label {
  fill: #a9a9a9;
  font-size: 11.7px;
  text-anchor: middle;
}
.w-label.dark {
  fill: #2a2a2a;
}

/* annotations */
.ann {
  position: absolute;
  box-sizing: border-box;
  background: #fdd65c;
  border-radius: 7px;
  font-size: 12px;
  line-height: 17px;
  font-weight: 700;
  padding: 9px 12px;
  white-space: nowrap;
  overflow: hidden;
}
.ann-salmon {
  left: 945px;
  top: -10px;
  width: 150px;
  height: 18px;
  padding: 0;
  background: #fb9f8e;
}
.ann-detect {
  left: 1752px;
  top: -17px;
  width: 243px;
  height: 51px;
}
.ann-am8 {
  left: 2085px;
  top: -10px;
  width: 170px;
  height: 11px;
  padding: 0;
}
.ann-value {
  left: 2042px;
  top: 196px;
  width: 183px;
  height: 54px;
  padding-top: 11px;
}
.ann-schema {
  left: 2421px;
  top: -10px;
  width: 180px;
  height: 36px;
  padding-top: 10px;
  font-weight: 400;
}
.ann-org {
  left: 2472px;
  top: 165px;
  width: 180px;
  height: 55px;
  padding-top: 11px;
  font-weight: 400;
}
.ann-email {
  left: 1804px;
  top: 592px;
  width: 160px;
  height: 54px;
  padding-top: 10px;
  background: #fff2c9;
  border: 1px solid #fbe7ad;
}

/* nodes */
.node {
  position: absolute;
  box-sizing: border-box;
  display: flex;
  flex-direction: column;
  border: 1px solid #5a78d6;
  border-radius: 4px;
  overflow: hidden;
  background: #f1f3fd;
}
.node.banded {
  flex-direction: row;
}
.node-body {
  flex: 1;
  min-width: 0;
}
.node-title {
  height: 21px;
  box-sizing: border-box;
  padding: 0 3px;
  font-size: 13px;
  display: flex;
  align-items: center;
  white-space: nowrap;
  background: linear-gradient(#c6d0fb 85%, #dfe4fb);
}
.partial-title {
  padding-left: 98px;
}
.port {
  height: 21px;
  box-sizing: border-box;
  display: flex;
  align-items: center;
  position: relative;
  padding: 0 4px 0 21px;
  border-top: 1px solid #dde2f6;
  white-space: nowrap;
}
.port span {
  flex: 1;
}
.port.in::before {
  content: "";
  position: absolute;
  left: 5px;
  top: 3px;
  border-left: 10px solid #111;
  border-top: 6.5px solid transparent;
  border-bottom: 6.5px solid transparent;
}
.port.out::before {
  content: "";
  position: absolute;
  left: 7px;
  top: 5px;
  width: 5px;
  height: 5px;
  border-right: 1.3px solid #222;
  border-bottom: 1.3px solid #222;
  transform: rotate(45deg);
}
.port.bare::before {
  display: none;
}
.port.hit::after {
  content: "";
  width: 0;
  height: 0;
  flex: none;
  border-left: 10px solid #111;
  border-top: 6.5px solid transparent;
  border-bottom: 6.5px solid transparent;
}
.port.open::after {
  content: "▷";
  width: 10px;
  flex: none;
  font-family: "DejaVu Sans", sans-serif;
  font-size: 14px;
  line-height: 14px;
  color: #222;
}
.port.conn {
  font-style: italic;
  padding-left: 21px;
}
.conn-ico {
  position: absolute;
  left: 3px;
  top: 3px;
  width: 14px;
  height: 14px;
}
.eye {
  width: 14px;
  height: 17px;
  margin-right: 8px;
  flex: none;
  box-sizing: border-box;
  position: relative;
  background: #b6e6ad;
  border: 1px solid #4b9d45;
  border-radius: 3px;
}
.eye::before {
  content: "";
  position: absolute;
  left: 1.5px;
  top: 4.5px;
  width: 9px;
  height: 6px;
  box-sizing: border-box;
  border: 1px solid #2f6f2f;
  border-radius: 50%;
}
.eye::after {
  content: "";
  position: absolute;
  left: 4.5px;
  top: 6px;
  width: 3px;
  height: 3px;
  border-radius: 50%;
  background: #2f6f2f;
}
.eye.live {
  background: #0b7a14;
  border-color: #0b7a14;
}
.eye.live::before {
  border-color: #fff;
}
.eye.live::after {
  background: #fff;
}
.eye.cut {
  background: #f3c33c;
  border-color: #c89b1f;
  margin-right: 6px;
}
.eye.cut::before {
  border-color: #8a6a10;
}
.eye.cut::after {
  left: 0;
  top: 7px;
  width: 13px;
  height: 1px;
  border-radius: 0;
  background: #8a6a10;
  transform: rotate(-45deg);
}
.err {
  width: 12px;
  height: 12px;
  margin: 0 5px 0 0;
  flex: none;
  border-radius: 50%;
  background: #d00e17;
  color: #fff;
  font: 700 10px/12px "Noto Sans", sans-serif;
  text-align: center;
}
.band {
  width: 25px;
  flex: none;
  background: #4a6fe2;
  display: flex;
  align-items: center;
  justify-content: center;
}
.band-ico {
  width: 20px;
  height: 20px;
}
.band-feature {
  color: #fff;
  height: 22px;
}

.n-partial { left: -96px; top: 17px; width: 150px; }
.n-coord { left: 157px; top: 17px; width: 179px; }
.n-reproj { left: 429px; top: 19px; width: 150px; }
.n-clip { left: 715px; top: -3px; width: 149px; }
.n-buffer { left: 945px; top: 19px; width: 194px; }
.n-am6 { left: 1046px; top: 196px; width: 149px; }
.n-fj6 { left: 1262px; top: 343px; width: 150px; }
.n-fw { left: 1570px; top: 490px; width: 151px; }
.n-schema { left: 1752px; top: 44px; width: 243px; }
.n-am8 { left: 2090px; top: 16px; width: 150px; }
.n-am5 { left: 2055px; top: 111px; width: 150px; }
.n-fwfuel { left: 2422px; top: 37px; width: 200px; }
.n-attrm { left: 2480px; top: 234px; width: 150px; }
.n-fj9 { left: 2296px; top: 339px; width: 149px; }
.n-emailer { left: 1813px; top: 657px; width: 151px; }
.n-creator { left: 264px; top: 422px; width: 151px; }
.n-temp { left: 514px; top: 422px; width: 168px; }

/* tooltips */
.tip {
  position: absolute;
  box-sizing: border-box;
  background: #c5cffb;
  border: 1px solid #bac6f3;
  border-radius: 8px;
  padding: 11px 12px;
  font-size: 11.3px;
  line-height: 17.2px;
  color: #1f2235;
  white-space: nowrap;
}
.tip-name {
  font-weight: 700;
  color: #111;
}
.tip-error {
  color: #e01b2c;
  margin-bottom: 20px;
}
.i1 {
  padding-left: 14px;
}
.i2 {
  padding-left: 29px;
}
.i3 {
  padding-left: 25px;
}
.gap {
  margin-top: 17.2px;
}
.tip-temp { left: 514px; top: 288px; width: 318px; height: 124px; }
.tip-fj { left: 1261px; top: 160px; width: 329px; height: 173px; }
.tip-fw { left: 1660px; top: 250px; width: 307px; height: 227px; }
.tip-email { left: 779px; top: 611px; width: 912px; height: 538px; }
.tip-table {
  border-collapse: collapse;
  border: 2px solid #8d91a0;
  font-size: 11.3px;
  line-height: 17px;
}
.tip-table td {
  border: 1.5px solid #8d91a0;
  padding: 0 2px;
  height: 23px;
}
.fj-table {
  margin: 0 0 0 15px;
  width: 287px;
}
.mail-table {
  margin: 0 0 0 31px;
  width: 244px;
}

.add-btn {
  position: absolute;
  left: 20px;
  top: 1105px;
  width: 96px;
  height: 96px;
  border-radius: 50%;
  background: #0a9a07;
  box-shadow: 0 6px 10px rgba(0,0,0,0.22);
  display: flex;
  align-items: center;
  justify-content: center;
}
.add-plus {
  width: 52px;
  height: 52px;
}

/* record information */
.right-dock {
  width: 607px;
  flex: none;
  box-sizing: border-box;
  border-left: 2px solid #ababab;
  margin-left: -1px;
  padding-top: 3px;
  display: flex;
  flex-direction: column;
}
.record-tab {
  padding-left: 16px;
  gap: 16px;
  width: 272px;
  box-sizing: border-box;
}
.right-dock .dock-tools {
  margin-right: -11px;
}
.rec-bar {
  height: 77px;
  margin-left: 19px;
  flex: none;
  display: flex;
  align-items: center;
  padding-top: 10px;
  box-sizing: border-box;
  white-space: nowrap;
  color: #222;
}
.rec-index {
  width: 21px;
  height: 33px;
  margin: 0 14px;
  box-sizing: border-box;
  border: 1px solid #dedede;
  color: #888;
  text-align: center;
  line-height: 31px;
}
.rec-nav {
  width: 15px;
  height: 32px;
  margin-left: 29px;
}
.rec-in {
  margin: 0 18px 0 29px;
}
.rec-box {
  height: 1130px;
  margin-left: 19px;
  flex: none;
  display: flex;
  box-sizing: border-box;
  background: #fff;
  border: 1.5px solid #9a9a9a;
  border-right: none;
}
.rec-list {
  width: 555px;
  flex: none;
}
.rec-row {
  display: flex;
  height: 36px;
  align-items: center;
  white-space: nowrap;
}
.rec-header {
  height: 47px;
}
.rec-header > div {
  height: 100%;
  display: flex;
  align-items: center;
  border-right: 1px solid #e4e4e4;
  box-sizing: border-box;
}
.col-prop {
  width: 220px;
  padding-left: 9px;
  box-sizing: border-box;
  flex: none;
}
.col-type {
  width: 176px;
  padding-left: 8px;
  box-sizing: border-box;
  flex: none;
}
.col-val {
  width: 159px;
  padding-left: 7px;
  box-sizing: border-box;
  flex: none;
}
.collapse {
  font-size: 32px;
  line-height: 32px;
  margin: -6px 0 0 15px;
}
.attr {
  padding-left: 87px;
}
.shaded {
  background: #e9e8e6;
}
.group-cell {
  display: flex;
  align-items: center;
  padding-left: 12px;
}
.rec-chev {
  width: 16px;
  height: 10px;
  color: #222;
  flex: none;
}
.rec-chev {
  stroke-width: 2;
}
.sigma {
  width: 30px;
  height: 28px;
  margin: 0 13px 0 8px;
  flex: none;
}
.info {
  width: 30px;
  height: 30px;
  margin-left: auto;
  margin-right: -15px;
  flex: none;
  box-sizing: border-box;
  border-radius: 50%;
  background: #0a7f99;
  border: 1.5px solid #0b2f3a;
  color: #fff;
  font: 700 20px/27px "DejaVu Serif", serif;
  text-align: center;
}
.fme-cell {
  display: flex;
  align-items: center;
  padding-left: 57px;
}
.side-chev {
  width: 8px;
  height: 8px;
  margin-right: 25px;
  border-top: 2.5px solid #8a8a8a;
  border-right: 2.5px solid #8a8a8a;
  transform: rotate(45deg);
}
.path-val {
  display: flex;
  align-items: center;
  justify-content: space-between;
  padding-right: 5px;
}
.more {
  width: 26px;
  height: 30px;
  box-sizing: border-box;
  border: 1.5px solid #d8d8d8;
  border-radius: 5px;
  text-align: center;
  line-height: 28px;
  font-size: 18px;
}
.rec-scroll {
  flex: 1;
  background: #f0f0f0;
  position: relative;
}
.scroll-up, .scroll-down {
  position: absolute;
  left: 11px;
  border-left: 6px solid transparent;
  border-right: 6px solid transparent;
}
.scroll-up {
  top: 15px;
  border-bottom: 8px solid #a0a0a0;
}
.scroll-down {
  bottom: 15px;
  border-top: 8px solid #a0a0a0;
}
.rec-search {
  margin: 13px 0 0 19px;
  display: flex;
  align-items: center;
  gap: 11px;
}
.rec-search-box {
  width: 340px;
  padding-left: 18px;
}
.combo {
  background: #fbfbfb;
  box-sizing: border-box;
  height: 41px;
  border: 1px solid #d5d5d5;
  border-bottom-color: #b0b0b0;
  display: flex;
  align-items: center;
  padding: 0 10px;
}
.rec-any {
  width: 161px;
}

/* data preview */
.bottom-dock {
  flex: 1;
  min-height: 0;
  border-top: 2px solid #ababab;
  display: flex;
  flex-direction: column;
}
.data-head {
  height: 41px;
}
.data-head .dock-tab {
  padding-right: 19px;
  gap: 16px;
}
.data-head .dock-tools {
  margin-right: -11px;
}
.data-body {
  flex: 1;
  display: flex;
  border-top: 2px solid #fff;
}
.tool-strip {
  width: 51px;
  flex: none;
  box-sizing: border-box;
  border-right: 1px solid #dcdcdc;
  padding-top: 4px;
  display: flex;
  flex-direction: column;
}
.strip-btn {
  width: 34px;
  height: 43px;
  margin-bottom: 14px;
  border-radius: 0 4px 4px 0;
  overflow: hidden;
}
.strip-btn svg {
  width: 34px;
  height: 40px;
  overflow: hidden;
}
.strip-btn.on {
  background: #cde6fb;
  box-shadow: inset 0 0 0 1px #b5d8f5;
}
.strip-sep {
  width: 28px;
  height: 2px;
  margin: -9px 0 11px;
  background: #d8d8d8;
}
.data-main {
  flex: 1;
  min-width: 0;
  padding-top: 17px;
  display: flex;
  flex-direction: column;
}
.group-line {
  height: 30px;
  flex: none;
  border-top: 1px solid #dcdcdc;
}
.group-label {
  display: inline-block;
  margin: -14px 0 0 15px;
  padding: 0 3px;
  line-height: 28px;
  background: #f0f0f0;
  vertical-align: top;
}
.data-combo-row {
  height: 41px;
  flex: none;
  margin-left: 11px;
  display: flex;
  gap: 16px;
}
.data-combo {
  width: 3586px;
  background: #fff;
  border: none;
  border-bottom: 1.5px solid #a0a0a0;
  padding-left: 12px;
}
.columns-btn {
  flex: 1;
  height: 44px;
  margin-top: -1px;
  box-sizing: border-box;
  background: #fbfbfb;
  border: 1px solid #d5d5d5;
  border-right: none;
  border-radius: 3px 0 0 3px;
  padding-left: 18px;
  line-height: 42px;
  white-space: nowrap;
}
.data-table-wrap {
  height: 171px;
  flex: none;
  margin: 16px 0 0 11px;
  box-sizing: border-box;
  border-top: 1.5px solid #9a9a9a;
  border-bottom: 1.5px solid #9a9a9a;
  border-left: 1px solid #9a9a9a;
  background: linear-gradient(90deg, #f0f0f0 32px, #fff 32px);
}
.data-table {
  border-collapse: collapse;
  table-layout: fixed;
  width: 1615px;
  white-space: nowrap;
}
.c-num { width: 32px; }
.c-a { width: 277px; }
.c-b { width: 1306px; }
.data-table th {
  height: 48px;
  padding: 0 8px;
  background: #fff;
  text-align: left;
  font-weight: 700;
  border-right: 1px solid #e6e6e6;
}
.num-head {
  border-right: none;
}
.data-table td {
  height: 46px;
  padding: 0 7px;
  background: #0a95ff;
  color: #fff;
  border-right: 1px solid #cfe9ff;
  border-bottom: 2px solid #c7dff3;
}
.data-table td.num {
  background: #b9dcf5;
  color: #111;
  text-align: center;
  padding: 0;
  border-right: none;
}
.right {
  text-align: right;
}
.data-search-row {
  margin: 14px 0 0 11px;
  height: 40px;
  flex: none;
  display: flex;
  align-items: center;
}
.data-search {
  width: 913px;
  height: 40px;
  padding-left: 15px;
}
.data-search-row > span:nth-child(2) {
  margin: 0 14px;
}
.data-any {
  width: 906px;
  height: 40px;
}
.row-count {
  margin-left: auto;
  width: 203px;
  white-space: nowrap;
  overflow: hidden;
}
```
